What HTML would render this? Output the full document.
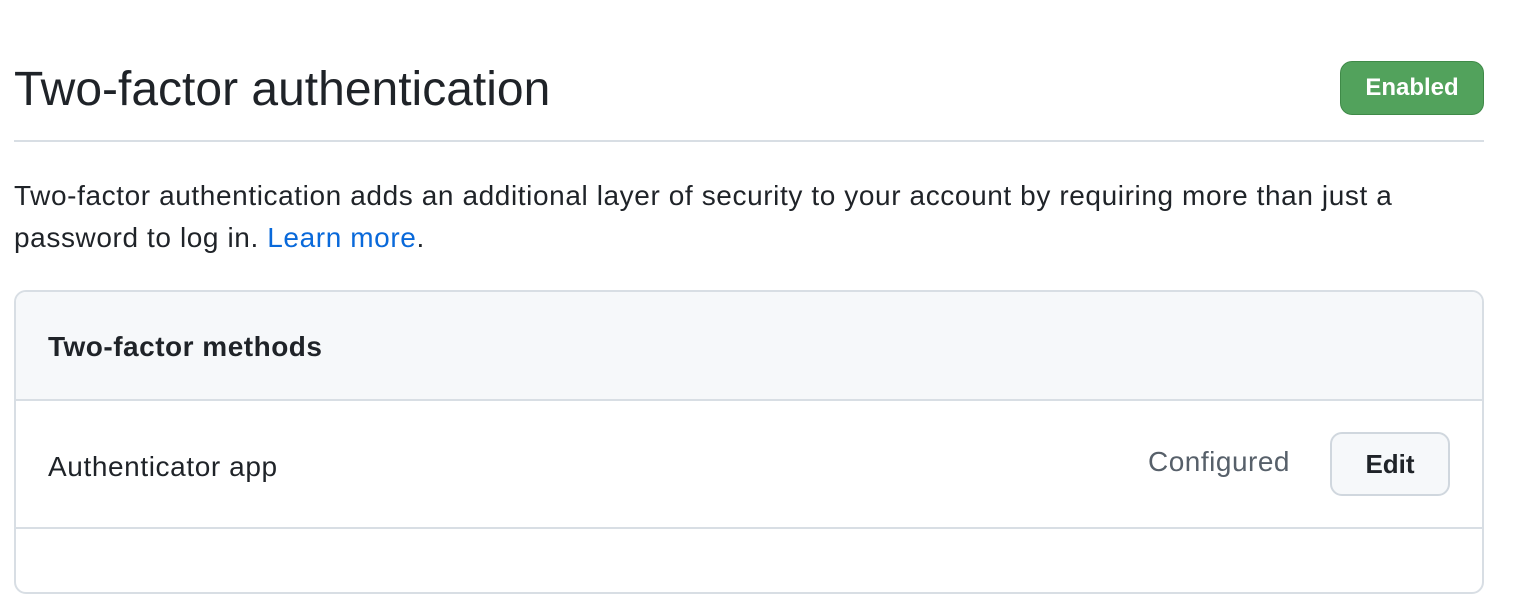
<!DOCTYPE html>
<html><head><style>
body{margin:0;width:1514px;height:544px;overflow:hidden;background:#fff;font-family:"Liberation Sans",sans-serif;color:#1f2328;position:relative}
.a{position:absolute;white-space:nowrap}
</style></head><body>
<div class="a" style="left:14px;top:62px;font-size:48px;line-height:56px">Two-factor authentication</div>
<div class="a" style="left:1340px;top:61px;width:142px;height:52px;background:#52a25c;border:1px solid #3f8a48;border-radius:12px;color:#fff;font-weight:bold;font-size:24px;line-height:52px;text-align:center">Enabled</div>
<div class="a" style="left:14px;top:140px;width:1470px;height:2px;background:#d8dee4"></div>
<div class="a" style="left:14px;top:175px;font-size:28px;letter-spacing:0.6px;line-height:42px">Two-factor authentication adds an additional layer of security to your account by requiring more than just a<br>password to log in. <span style="color:#0969da">Learn more</span>.</div>
<div class="a" style="left:14px;top:290px;width:1466px;height:300px;border:2px solid #d8dee4;border-radius:12px;overflow:hidden">
 <div style="height:107px;background:#f6f8fa;border-bottom:2px solid #d8dee4"></div>
 <div style="height:126px;border-bottom:2px solid #d8dee4"></div>
</div>
<div class="a" style="left:48px;top:330px;font-size:28px;letter-spacing:0.5px;font-weight:bold;line-height:34px">Two-factor methods</div>
<div class="a" style="left:48px;top:450px;font-size:28px;letter-spacing:0.6px;line-height:34px">Authenticator app</div>
<div class="a" style="left:1148px;top:445px;font-size:28px;letter-spacing:0.5px;line-height:34px;color:#57606a">Configured</div>
<div class="a" style="left:1330px;top:432px;width:116px;height:60px;background:#f6f8fa;border:2px solid #d0d7de;border-radius:12px;font-weight:bold;font-size:26px;line-height:60px;text-align:center">Edit</div>
</body></html>
